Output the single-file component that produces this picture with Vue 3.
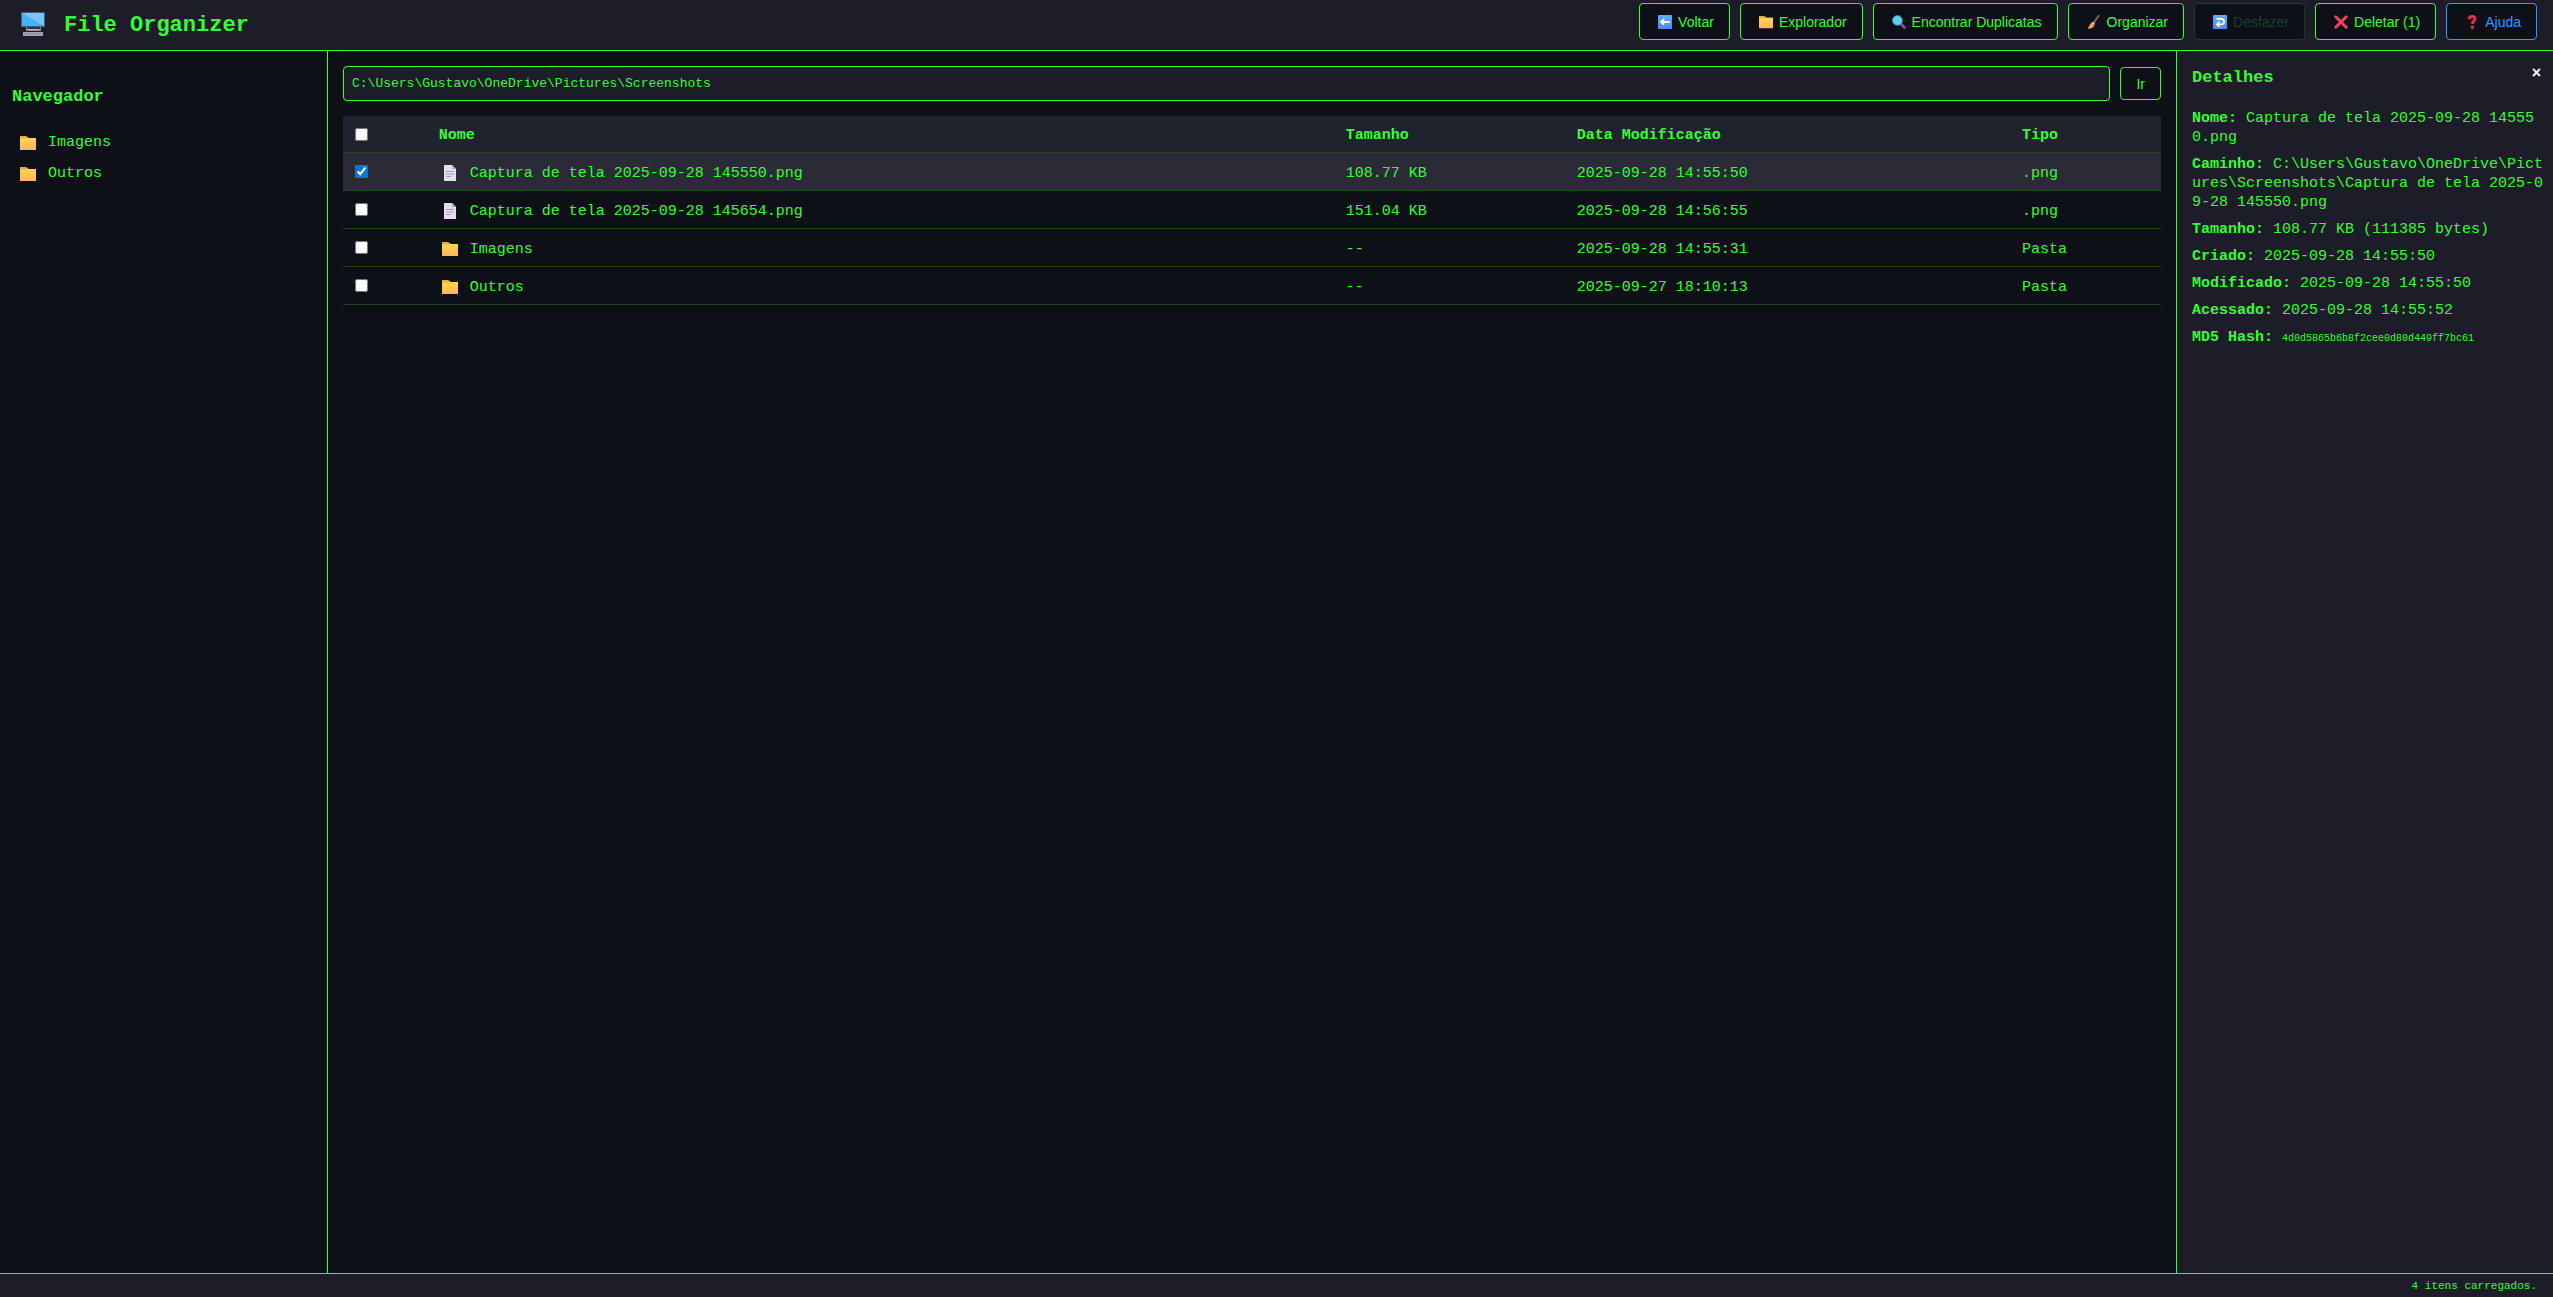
<script setup>
import { ref, computed, h } from 'vue'

const currentPath = ref('C:\\Users\\Gustavo\\OneDrive\\Pictures\\Screenshots')
const folders = ['Imagens', 'Outros']

const files = ref([
  { name: 'Captura de tela 2025-09-28 145550.png', size: '108.77 KB', date: '2025-09-28 14:55:50', type: '.png', selected: true },
  { name: 'Captura de tela 2025-09-28 145654.png', size: '151.04 KB', date: '2025-09-28 14:56:55', type: '.png', selected: false },
  { name: 'Imagens', size: '--', date: '2025-09-28 14:55:31', type: 'Pasta', selected: false },
  { name: 'Outros', size: '--', date: '2025-09-27 18:10:13', type: 'Pasta', selected: false }
])
const selectedCount = computed(() => files.value.filter((f) => f.selected).length)
const allSelected = computed({
  get: () => selectedCount.value === files.value.length,
  set: (on) => files.value.forEach((f) => { f.selected = on })
})

const actions = computed(() => [
  { icon: 'back', label: 'Voltar' },
  { icon: 'folder', label: 'Explorador' },
  { icon: 'search', label: 'Encontrar Duplicatas' },
  { icon: 'brush', label: 'Organizar' },
  { icon: 'undo', label: 'Desfazer', disabled: true },
  { icon: 'cross', label: `Deletar (${selectedCount.value})` },
  { icon: 'question', label: 'Ajuda', kind: 'help' }
])

const details = [
  { label: 'Nome:', value: 'Captura de tela 2025-09-28 145550.png' },
  { label: 'Caminho:', value: 'C:\\Users\\Gustavo\\OneDrive\\Pictures\\Screenshots\\Captura de tela 2025-09-28 145550.png' },
  { label: 'Tamanho:', value: '108.77 KB (111385 bytes)' },
  { label: 'Criado:', value: '2025-09-28 14:55:50' },
  { label: 'Modificado:', value: '2025-09-28 14:55:50' },
  { label: 'Acessado:', value: '2025-09-28 14:55:52' },
  { label: 'MD5 Hash:', value: '4d0d5865b6b8f2cee0d80d449ff7bc61', hash: true }
]

// Each glyph is a list of [tag, attributes] on a 16x16 grid.
const glyphs = {
  folder: [
    ['path', { d: 'M0 1h6l3 2h7v3H0z', fill: '#f5a93c' }],
    ['path', { d: 'M0 3.6h7L8.6 3H16v12H0z', fill: 'url(#folder-fill)' }]
  ],
  file: [
    ['path', { d: 'M2 0h8l4 4v12H2z', fill: '#e6dcf0' }],
    ['path', { d: 'M10 0l4 4h-4z', fill: '#b3a8c0' }],
    ['path', { d: 'M4 6.5h8M4 9h8M4 11.5h5', stroke: '#a99fb5', 'stroke-width': 1 }]
  ],
  back: [
    ['rect', { width: 16, height: 16, rx: 1, fill: 'url(#tile-fill)' }],
    ['path', { d: 'M13.5 8H4M7 4.8L3.6 8L7 11.2', stroke: '#fff', 'stroke-width': 2.2, fill: 'none' }]
  ],
  undo: [
    ['rect', { width: 16, height: 16, rx: 1, fill: 'url(#tile-fill)' }],
    ['path', { d: 'M4 4.5h5.5a3 3 0 0 1 0 6.2H5M7.4 7.6L4.4 10.7L7.4 13.6', stroke: '#fff', 'stroke-width': 2, fill: 'none' }]
  ],
  search: [
    ['path', { d: 'M10 10l4.200 4.200', stroke: '#8a4f96', 'stroke-width': 3.2, 'stroke-linecap': 'round' }],
    ['circle', { cx: 6.2, cy: 6.2, r: 5.6, fill: '#5cd0ef', stroke: '#3f7f9c', 'stroke-width': 1 }]
  ],
  brush: [
    ['path', { d: 'M13.4 .8L7.6 9', stroke: '#8d6258', 'stroke-width': 2, 'stroke-linecap': 'round' }],
    ['path', { d: 'M6.6 7.6l2.6 2.2-1 1.6-3-2.6z', fill: '#d8c9c4' }],
    ['path', { d: 'M5.2 8.6l3 2.8C8 14.4 5 16 .6 15.8 2.6 13.4 2.6 10.6 5.2 8.6z', fill: '#f79a5b' }]
  ],
  cross: [
    ['path', { d: 'M2 2l12 12M14 2L2 14', stroke: '#f4415f', 'stroke-width': 3.4, 'stroke-linecap': 'round' }]
  ],
  question: [
    ['path', { d: 'M4.8 4.8C4.8 2.6 6.200 1.600 8.200 1.600s3.200 1.100 3.200 2.900C11.400 6.800 8.400 6.900 8.400 10.400', stroke: '#ee2f4f', 'stroke-width': 3.2, fill: 'none' }],
    ['circle', { cx: 8.4, cy: 14, r: 1.9, fill: '#ee2f4f' }]
  ]
}

const Glyph = (props) =>
  h('svg', { viewBox: '0 0 16 16', 'aria-hidden': 'true' }, glyphs[props.name].map(([tag, attrs]) => h(tag, attrs)))
Glyph.props = ['name']
</script>

<template>
  <div class="app">
    <svg class="defs" aria-hidden="true">
      <defs>
        <linearGradient id="folder-fill" x1="0" y1="0" x2="0" y2="1">
          <stop offset="0" stop-color="#ffd84a" />
          <stop offset="1" stop-color="#ffb45a" />
        </linearGradient>
        <linearGradient id="tile-fill" x1="0" y1="0" x2="0" y2="1">
          <stop offset="0" stop-color="#5aaefb" />
          <stop offset="1" stop-color="#4a8cec" />
        </linearGradient>
      </defs>
    </svg>

    <header class="topbar">
      <div class="brand">
        <svg class="logo" viewBox="0 0 24 24" aria-hidden="true">
          <path d="M0 0h24v15H0z" fill="#4d5a75" />
          <path d="M1 1h22v13H1z" fill="#41b4f5" />
          <path d="M1 1h22v13z" fill="#7cc4f6" />
          <path d="M17 1h6v13z" fill="#62cdf8" />
          <path d="M5 15h15v4H5z" fill="#8d8598" />
          <path d="M6 15h13v2H6z" fill="#33303f" />
          <path d="M7 17h11v1H7z" fill="#c9c0d2" />
          <path d="M2 20h20v4H2z" fill="#aaa2b4" />
          <path d="M4 22h16" stroke="#7d7588" stroke-dasharray="2 1" />
        </svg>
        <h1>File Organizer</h1>
      </div>
      <nav class="actions">
        <button v-for="a in actions" :key="a.icon" type="button" class="btn" :class="a.kind" :disabled="a.disabled">
          <Glyph :name="a.icon" class="btn-icon" />{{ a.label }}
        </button>
      </nav>
    </header>

    <div class="body">
      <aside class="sidebar">
        <h2>Navegador</h2>
        <ul>
          <li v-for="f in folders" :key="f"><Glyph name="folder" class="item-icon" />{{ f }}</li>
        </ul>
      </aside>

      <main class="content">
        <form class="path-bar" @submit.prevent>
          <input v-model="currentPath" type="text" aria-label="Caminho" spellcheck="false" />
          <button type="submit" class="btn go">Ir</button>
        </form>

        <table>
          <colgroup>
            <col class="c-check" /><col class="c-name" /><col class="c-size" /><col class="c-date" /><col />
          </colgroup>
          <thead>
            <tr>
              <th><input v-model="allSelected" type="checkbox" aria-label="Selecionar tudo" /></th>
              <th>Nome</th>
              <th>Tamanho</th>
              <th>Data Modificação</th>
              <th>Tipo</th>
            </tr>
          </thead>
          <tbody>
            <tr v-for="f in files" :key="f.name" :class="{ selected: f.selected }">
              <td><input v-model="f.selected" type="checkbox" :aria-label="f.name" /></td>
              <td>
                <span class="file-name">
                  <Glyph :name="f.type === 'Pasta' ? 'folder' : 'file'" class="item-icon" />{{ f.name }}
                </span>
              </td>
              <td>{{ f.size }}</td>
              <td>{{ f.date }}</td>
              <td>{{ f.type }}</td>
            </tr>
          </tbody>
        </table>
      </main>

      <aside class="details">
        <div class="details-head">
          <h2>Detalhes</h2>
          <button type="button" class="close" aria-label="Fechar">×</button>
        </div>
        <p v-for="d in details" :key="d.label">
          <strong>{{ d.label }}</strong>&nbsp;<small v-if="d.hash">{{ d.value }}</small><template v-else>{{ d.value }}</template>
        </p>
      </aside>
    </div>

    <footer class="status">4 itens carregados.</footer>
  </div>
</template>

<style>
body {
  margin: 0;
  background: #0d1117;
}
</style>

<style scoped>
.app {
  --green: #33ff33;
  --bg: #0d1017;
  --panel: #1c1d28;
  --line: #224422;
  display: flex;
  flex-direction: column;
  min-height: 100vh;
  background: var(--bg);
  color: var(--green);
  font: 15px/19px "Liberation Mono", monospace;
}
.app * {
  box-sizing: border-box;
}
.defs {
  position: absolute;
  width: 0;
  height: 0;
}
h1,
h2,
ul,
p {
  margin: 0;
  padding: 0;
}
h2 {
  font-size: 17px;
  line-height: 22px;
}

.topbar {
  display: flex;
  justify-content: space-between;
  align-items: flex-start;
  padding: 3px 16px 10px 21px;
  background: var(--panel);
  border-bottom: 1px solid var(--green);
}
.brand {
  display: flex;
  align-items: center;
  gap: 19px;
  padding-top: 4px;
}
.logo {
  width: 24px;
  height: 24px;
}
h1 {
  padding-top: 5px;
  font-size: 22px;
  line-height: 28px;
}
.actions {
  display: flex;
  gap: 10px;
}
.btn {
  display: flex;
  align-items: center;
  gap: 4px;
  height: 37px;
  padding: 0 15px;
  border: 1px solid var(--green);
  border-radius: 4px;
  background: var(--bg);
  color: var(--green);
  font: 14px/16px "Liberation Sans", Arial, sans-serif;
  white-space: nowrap;
}
.btn:disabled {
  border-color: #1f3a26;
  color: #1f3f26;
}
.btn.help {
  border-color: #3399ff;
  color: #3399ff;
}
.btn-icon {
  width: 14px;
  height: 14px;
  margin: 0 2px 0 3px;
}

.body {
  display: flex;
  flex: 1;
}
.sidebar {
  flex: 0 0 328px;
  padding: 35px 12px;
  border-right: 1px solid var(--green);
}
.sidebar ul {
  margin-top: 19px;
  list-style: none;
}
.sidebar li {
  display: flex;
  align-items: center;
  gap: 12px;
  height: 31px;
  padding-left: 8px;
}
.item-icon {
  flex: none;
  width: 16px;
  height: 16px;
}

.content {
  flex: 1;
  min-width: 0;
  padding: 15px;
}
.path-bar {
  display: flex;
  align-items: center;
  gap: 10px;
  margin-bottom: 15px;
}
.path-bar input {
  flex: 1;
  height: 35px;
  padding: 0 8px;
  border: 1px solid var(--green);
  border-radius: 4px;
  outline: 0;
  background: var(--panel);
  color: var(--green);
  font: 13px/16px "Liberation Mono", monospace;
}
.btn.go {
  height: 33px;
}
table {
  width: 100%;
  border-collapse: separate;
  border-spacing: 0;
  table-layout: fixed;
}
.c-check { width: 4.6%; }
.c-name { width: 49.9%; }
.c-size { width: 12.7%; }
.c-date { width: 24.5%; }
th,
td {
  height: 38px;
  padding: 0 12px;
  border-bottom: 1px solid var(--line);
  text-align: left;
  vertical-align: middle;
}
th {
  height: 37px;
  background: #20222d;
}
th + th,
td + td {
  padding-top: 3px;
}
.selected td {
  background: #2a2b37;
}
table input {
  display: block;
  width: 13px;
  height: 13px;
  margin: 0;
  accent-color: #0078d7;
}
.file-name {
  display: flex;
  align-items: center;
  gap: 12px;
  padding-left: 3px;
}

.details {
  flex: 0 0 377px;
  padding: 16px 9px 15px 15px;
  border-left: 1px solid var(--green);
  background: var(--panel);
}
.details-head {
  display: flex;
  justify-content: space-between;
  align-items: flex-start;
  margin-bottom: 20px;
}
.close {
  padding: 0 3px;
  border: 0;
  background: none;
  color: #fff;
  font: bold 16px/12px "Liberation Sans", Arial, sans-serif;
}
.details p {
  margin-bottom: 8px;
  word-break: break-all;
}
small {
  font-size: 10px;
}

.status {
  padding: 4px 16px 3px;
  border-top: 1px solid var(--green);
  background: var(--panel);
  font-size: 11px;
  line-height: 16px;
  text-align: right;
}
</style>
